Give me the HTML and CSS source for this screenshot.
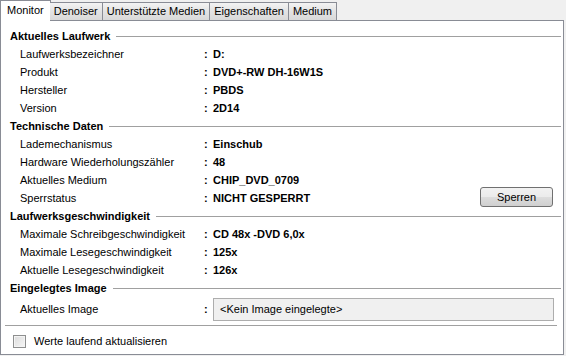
FILE: index.html
```html
<html>
<head>
<meta charset="UTF-8">
<title>Monitor</title>
<link rel="stylesheet" href="styles.css">
</head>
<body>

<div class="tabs">
  <div class="tab active">Monitor</div>
  <div class="tab">Denoiser</div>
  <div class="tab">Unterstützte Medien</div>
  <div class="tab">Eigenschaften</div>
  <div class="tab">Medium</div>
</div>

<div class="pane">

  <div class="group">Aktuelles Laufwerk</div>
  <div class="fields">
    <div class="label">Laufwerksbezeichner</div><div class="colon">:</div><div class="value">D:</div>
    <div class="label">Produkt</div><div class="colon">:</div><div class="value">DVD+-RW DH-16W1S</div>
    <div class="label">Hersteller</div><div class="colon">:</div><div class="value">PBDS</div>
    <div class="label">Version</div><div class="colon">:</div><div class="value">2D14</div>
  </div>

  <div class="group">Technische Daten</div>
  <div class="fields">
    <div class="label">Lademechanismus</div><div class="colon">:</div><div class="value">Einschub</div>
    <div class="label">Hardware Wiederholungszähler</div><div class="colon">:</div><div class="value">48</div>
    <div class="label">Aktuelles Medium</div><div class="colon">:</div><div class="value">CHIP_DVD_0709</div>
    <div class="label">Sperrstatus</div><div class="colon">:</div><div class="value">NICHT GESPERRT</div>
    <button class="btn">Sperren</button>
  </div>

  <div class="group">Laufwerksgeschwindigkeit</div>
  <div class="fields">
    <div class="label">Maximale Schreibgeschwindigkeit</div><div class="colon">:</div><div class="value">CD 48x -DVD 6,0x</div>
    <div class="label">Maximale Lesegeschwindigkeit</div><div class="colon">:</div><div class="value">125x</div>
    <div class="label">Aktuelle Lesegeschwindigkeit</div><div class="colon">:</div><div class="value">126x</div>
  </div>

  <div class="group">Eingelegtes Image</div>
  <div class="fields image-row">
    <div class="label">Aktuelles Image</div><div class="colon">:</div><div class="imagebox">&lt;Kein Image eingelegte&gt;</div>
  </div>

  <div class="separator"></div>

  <label class="check"><span class="box"></span>Werte laufend aktualisieren</label>

</div>

</body>
</html>
```

FILE: styles.css
```css
body { margin: 0; width: 566px; height: 356px; overflow: hidden;
       background: #f0f0f0; color: #000;
       font-size: 11px; font-family: "Liberation Sans", Arial, sans-serif; }

/* tab strip */
.tabs      { display: flex; align-items: flex-end; height: 20px; position: relative; z-index: 1; }
.tab       { height: 18px; box-sizing: border-box; padding: 0 4px; line-height: 16px;
             border: 1px solid #898c95; border-bottom: none; margin-left: -1px;
             background: linear-gradient(#f3f3f3, #e3e3e3 50%, #d9d9d9); color: #000; }
.tab:first-child { margin-left: 0; }
.tab.active { height: 21px; margin-bottom: -1px; padding: 0 6px; line-height: 19px;
              background: #fff; }
.tab.active + .tab { border-left: none; }

/* page */
.pane      { box-sizing: border-box; width: 564px; height: 335px;
             border: 1px solid #898c95; background: #fff;
             padding: 6px 2px 0 9px; display: flex; flex-direction: column; }

.group     { display: flex; align-items: center; height: 18px; font-weight: bold; }
.group::after { content: ""; flex: 1; height: 1px; margin-left: 6px; background: #a0a0a0; }

.fields    { display: grid; grid-template-columns: 184px 10px 1fr auto; padding-left: 10px;
             grid-auto-rows: 18px; align-items: center; }
.label     { grid-column: 1; white-space: nowrap; }
.colon     { grid-column: 2; font-weight: bold; }
.value     { grid-column: 3; font-weight: bold; white-space: nowrap; margin-left: -1px; }

.btn       { grid-column: 4; grid-row: 4; width: 73px; height: 20px; margin: -2px 8px 0 0;
             border: 1px solid #707070; border-radius: 3px; padding: 0;
             background: linear-gradient(#f2f2f2, #ebebeb 50%, #dddddd 51%, #cfcfcf);
             font: 11px "Liberation Sans", Arial, sans-serif; color: #000; }

.image-row { grid-auto-rows: 24px; }
.imagebox  { grid-column: 3 / 5; box-sizing: border-box; height: 23px; margin: 0 7px 0 -1px;
             border: 1px solid #adadad; background: #f0f0f0; color: #000;
             padding: 0 6px; line-height: 20px; }

.separator { height: 1px; background: #a0a0a0; margin: 4px 4px 0 -5px; }

.check     { display: flex; align-items: center; height: 16px; margin-top: 7px; padding-left: 3px; }
.box       { width: 13px; height: 13px; box-sizing: border-box; margin-right: 8px;
             border: 1px solid #8e8f8f;
             background: linear-gradient(135deg, #dcdcdc, #f6f6f6); box-shadow: inset 0 0 0 1px #f4f4f4; }
```
